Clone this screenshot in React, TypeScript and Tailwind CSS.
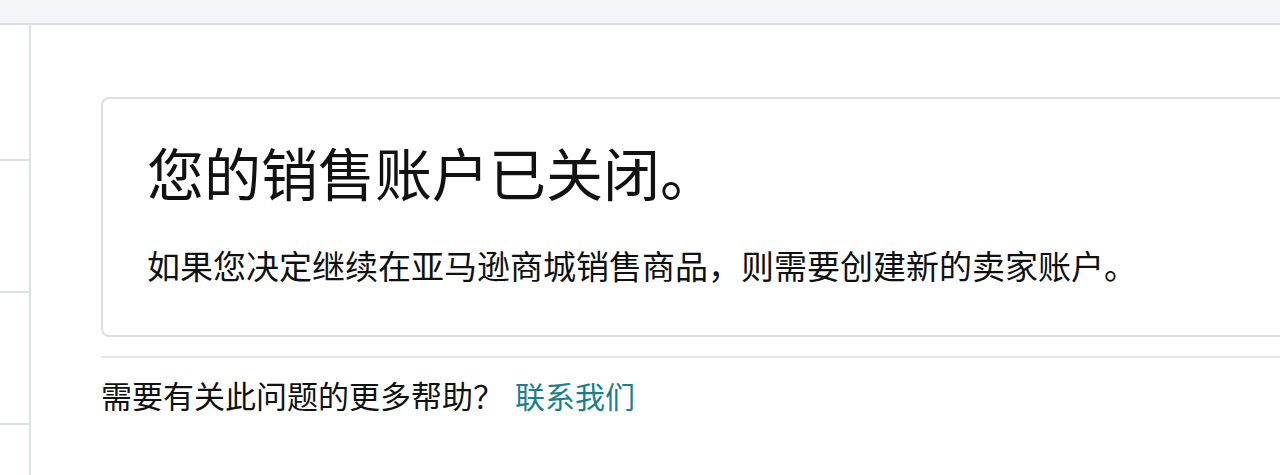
import React from "react";

const font = { fontFamily: '"Noto Sans CJK SC", "Noto Sans", sans-serif' };

export default function App() {
  return (
    <div className="h-[475px] w-[1280px] overflow-hidden bg-white text-[#0f1111]" style={font}>
      <div className="h-[25px] bg-[#f3f6f6] border-b-2 border-[#d9dede]" />
      <div className="flex h-[450px]">
        <div className="w-[31px] shrink-0 border-r-2 border-[#dce1e1] flex flex-col">
          <div className="h-[136px] border-b-2 border-[#dce1e1]" />
          <div className="h-[132px] border-b-2 border-[#dce1e1]" />
          <div className="h-[132px] border-b-2 border-[#dce1e1]" />
        </div>
        <div className="flex-1 overflow-hidden pl-[70px] pt-[72px]">
          <div className="w-[1300px]">
            <div className="rounded-lg border-2 border-[#dddfdf] pl-[44px] pt-[32px] pb-[46px]">
              <h1 className="text-[57px] leading-[80px] font-normal text-[#111111]">您的销售账户已关闭。</h1>
              <p className="mt-[30px] text-[33px] leading-[48px] text-[#0f1111]">如果您决定继续在亚马逊商城销售商品，则需要创建新的卖家账户。</p>
            </div>
            <div className="mt-[19px] h-[2px] bg-[#e3e6e6]" />
            <div className="mt-[15px] flex items-center text-[31px] leading-[44px]">
              <span className="text-[#0f1111]">需要有关此问题的更多帮助？</span>
              <span className="ml-[11px] text-[30px] text-[#1a7f8e]">联系我们</span>
            </div>
          </div>
        </div>
      </div>
    </div>
  );
}
